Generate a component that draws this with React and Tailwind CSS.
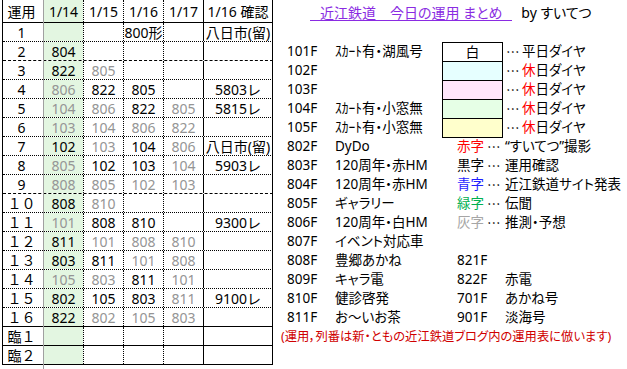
import React from 'react';

// 運用表の各行: [運用, 1/14, 1/15, 1/16, 1/17, 1/16確認]  先頭 ~ は灰字
const rows = [
  ['1', '', '', '800形', '', '八日市(留)'],
  ['2', '804', '', '', '', ''],
  ['3', '822', '~805', '', '', ''],
  ['4', '~806', '822', '805', '', '5803レ'],
  ['5', '~104', '~806', '822', '~805', '5815レ'],
  ['6', '~103', '~104', '~806', '~822', ''],
  ['7', '102', '~103', '104', '~806', '八日市(留)'],
  ['8', '~805', '102', '103', '~104', '5903レ'],
  ['9', '~808', '~805', '~102', '~103', ''],
  ['１０', '808', '~810', '', '', ''],
  ['１１', '~101', '808', '810', '', '9300レ'],
  ['１２', '811', '~101', '~808', '~810', ''],
  ['１３', '803', '811', '~101', '~808', ''],
  ['１４', '~105', '~803', '811', '~101', ''],
  ['１５', '802', '105', '803', '~811', '9100レ'],
  ['１６', '822', '~802', '~105', '~803', ''],
  ['臨１', '', '', '', '', ''],
  ['臨２', '', '', '', '', ''],
];

const rowBorder = (i) => {
  if (i === 1 || i === 8) return 'border-dashed';
  if (i >= 15) return 'border-solid';
  return 'border-dotted';
};

const colClass = [
  'w-[41px] pr-[4px]',
  'w-[40px] border-r border-dotted border-black bg-[#e3f6e1] bg-clip-padding',
  'w-[40px] border-r border-dotted border-black',
  'w-[40px] border-r border-dotted border-black',
  'w-[40px] border-r border-solid border-black',
  'w-[69px] border-r border-solid border-black',
];

const Cell = ({ i, v }) => {
  const grey = v.startsWith('~');
  const text = grey ? v.slice(1) : v;
  return (
    <div
      className={`${colClass[i]} h-full shrink-0 flex items-center justify-center pt-[1px] whitespace-nowrap ${
        grey ? 'text-[#959595]' : 'text-black'
      }`}
    >
      {text}
    </div>
  );
};

const OpsTable = () => (
  <div className="ml-[2px] w-[271px] shrink-0 border-l border-black text-[14px] leading-[18px]">
    <div className="flex h-[23px] border-b border-solid border-black">
      {['運用', '1/14', '1/15', '1/16', '1/17', '1/16 確認'].map((h, i) => (
        <Cell key={h} i={i} v={h} />
      ))}
    </div>
    {rows.map((r, ri) => (
      <div key={ri} className={`flex h-[19px] border-b border-black ${rowBorder(ri)}`}>
        {r.map((v, ci) => (
          <Cell key={ci} i={ci} v={v} />
        ))}
      </div>
    ))}
  </div>
);

const Dots = ({ className = '' }) => (
  <span className={`font-['Noto_Sans_CJK_JP',sans-serif] shrink-0 ${className}`}>…</span>
);

const Row = ({ children }) => (
  <div className="flex items-center h-[19px] pl-[14px] leading-[19px] whitespace-nowrap">{children}</div>
);

const Code = ({ children }) => <span className="w-[48px] shrink-0">{children}</span>;

const boxes = [
  { code: '101F', desc: 'ｽｶｰﾄ有・湖風号', bg: 'bg-white', label: '白' },
  { code: '102F', desc: '', bg: 'bg-[#e6ffff]' },
  { code: '103F', desc: '', bg: 'bg-[#ffe6fb]' },
  { code: '104F', desc: 'ｽｶｰﾄ有・小窓無', bg: 'bg-[#e6ffe6]' },
  { code: '105F', desc: 'ｽｶｰﾄ有・小窓無', bg: 'bg-[#ffffcc]', last: true },
];

const legend = [
  { code: '802F', desc: 'DyDo', label: '赤字', color: 'text-[#ff0000]', note: '“すいてつ”撮影' },
  { code: '803F', desc: '120周年・赤HM', label: '黒字', color: 'text-black', note: '運用確認' },
  { code: '804F', desc: '120周年・赤HM', label: '青字', color: 'text-[#1f1fff]', note: '近江鉄道サイト発表' },
  { code: '805F', desc: 'ギャラリー', label: '緑字', color: 'text-[#00b050]', note: '伝聞' },
  { code: '806F', desc: '120周年・白HM', label: '灰字', color: 'text-[#a6a6a6]', note: '推測・予想' },
];

const pairs = [
  ['808F', '豊郷あかね', '821F', ''],
  ['809F', 'キャラ電', '822F', '赤電'],
  ['810F', '健診啓発', '701F', 'あかね号'],
  ['811F', 'お～いお茶', '901F', '淡海号'],
];

const Summary = () => (
  <div className="flex-1 min-w-0 text-[13.5px] text-black [font-feature-settings:'palt']">
    <div className="flex items-start h-[23px] pl-[37px] text-[14px] whitespace-pre">
      <span className="mt-[5px] h-[16px] leading-[15px] px-[10px] border-b border-[#8a2be2] text-[#8a2be2]">
        近江鉄道　今日の運用 まとめ
      </span>
      <span className="mt-[5px] ml-[9px] leading-[15px]">by すいてつ</span>
    </div>
    <div className="h-[19px]" />

    {boxes.map((b) => (
      <Row key={b.code}>
        <Code>{b.code}</Code>
        <span className="w-[107px] shrink-0">{b.desc}</span>
        <div
          className={`w-[61px] self-start shrink-0 flex items-center justify-center border-t border-x border-black ${b.bg} ${
            b.last ? 'h-[20px] border-b' : 'h-[19px]'
          }`}
        >
          {b.label}
        </div>
        <Dots className="ml-[3px] w-[16px]" />
        <span>
          {b.label ? (
            '平日ダイヤ'
          ) : (
            <>
              <span className="text-[#ff0000]">休</span>日ダイヤ
            </>
          )}
        </span>
      </Row>
    ))}

    {legend.map((l) => (
      <Row key={l.code}>
        <Code>{l.code}</Code>
        <span className="w-[122px] shrink-0">{l.desc}</span>
        <span className={`w-[30px] shrink-0 ${l.color}`}>{l.label}</span>
        <Dots className="w-[18px]" />
        <span>{l.note}</span>
      </Row>
    ))}

    <Row>
      <Code>807F</Code>
      <span>イベント対応車</span>
    </Row>

    {pairs.map(([c1, d1, c2, d2]) => (
      <Row key={c1}>
        <Code>{c1}</Code>
        <span className="w-[122px] shrink-0">{d1}</span>
        <Code>{c2}</Code>
        <span>{d2}</span>
      </Row>
    ))}

    <div className="h-[19px] pl-[8px] leading-[19px] text-[12.3px] text-[#d00000] whitespace-nowrap">
      (運用，列番は新・ともの近江鉄道ブログ内の運用表に倣います)
    </div>
  </div>
);

export default function App() {
  return (
    <div className="relative w-[627px] h-[369px] overflow-hidden bg-white font-['Noto_Sans','Noto_Sans_CJK_JP',sans-serif]">
      <div className="flex">
        <OpsTable />
        <Summary />
      </div>
      {/* ウィンドウ枠固定の線 */}
      <div className="absolute left-[43px] top-0 w-px h-[369px] bg-[#a0a0a0]" />
    </div>
  );
}
